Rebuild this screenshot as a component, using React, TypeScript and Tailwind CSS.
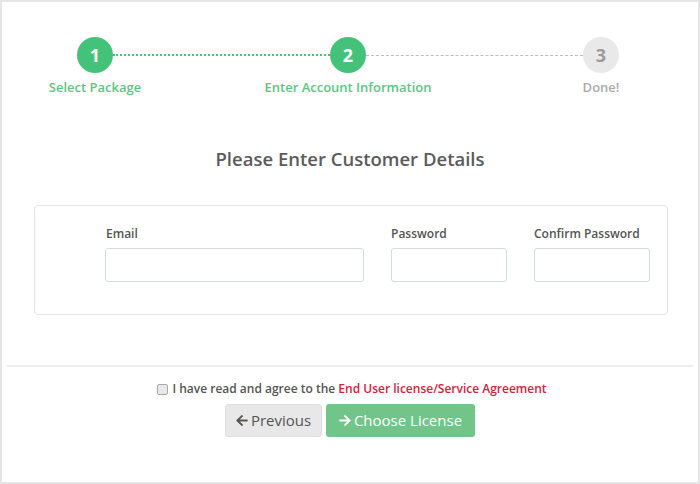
import React from "react";

const font = "font-['Open_Sans',_'Liberation_Sans',_sans-serif]";

function Circle({ n, active }: { n: number; active: boolean }) {
  return (
    <div
      className={`w-[36px] h-[36px] rounded-full flex items-center justify-center text-[18px] font-bold shrink-0 ${
        active ? "bg-[#45c27a] text-white" : "bg-[#e9e9e9] text-[#9a9a9a]"
      }`}
    >
      {n}
    </div>
  );
}

function ArrowLeft({ className }: { className?: string }) {
  return (
    <svg viewBox="0 0 448 512" className={className} fill="currentColor">
      <path d="M257.5 445.1l-22.2 22.2c-9.4 9.4-24.6 9.4-33.9 0L7 273c-9.4-9.4-9.4-24.6 0-33.9L201.4 44.7c9.4-9.4 24.6-9.4 33.9 0l22.2 22.2c9.5 9.5 9.3 25-.4 34.3L136.6 216H424c13.3 0 24 10.7 24 24v32c0 13.3-10.7 24-24 24H136.6l120.5 114.8c9.8 9.3 10 24.8.4 34.3z" />
    </svg>
  );
}

function ArrowRight({ className }: { className?: string }) {
  return (
    <svg viewBox="0 0 448 512" className={className} fill="currentColor">
      <path d="M190.5 66.9l22.2-22.2c9.4-9.4 24.6-9.4 33.9 0L441 239c9.4 9.4 9.4 24.6 0 33.9L246.6 467.3c-9.4 9.4-24.6 9.4-33.9 0l-22.2-22.2c-9.5-9.5-9.3-25 .4-34.3L311.4 296H24c-13.3 0-24-10.7-24-24v-32c0-13.3 10.7-24 24-24h287.4L190.9 101.2c-9.8-9.3-10-24.8-.4-34.3z" />
    </svg>
  );
}

export default function App() {
  return (
    <div className={`w-[700px] h-[484px] bg-white border-2 border-[#e6e6e6] ${font} overflow-hidden`}>
      {/* Stepper */}
      <div className="pt-[35px]">
        <div className="ml-[75px] w-[542px] flex items-center">
          <Circle n={1} active />
          <div className="flex-1 border-t-2 border-dotted border-[#45c27a]" />
          <Circle n={2} active />
          <div className="flex-1 border-t border-dashed border-[#bdbdbd]" />
          <Circle n={3} active={false} />
        </div>
        <div className="ml-[93px] w-[506px] flex justify-between mt-[5px] text-[13px] font-semibold leading-[18px]">
          <div className="w-0 flex justify-center whitespace-nowrap text-[#5cc583]">Select Package</div>
          <div className="w-0 flex justify-center whitespace-nowrap text-[#5cc583]">Enter Account Information</div>
          <div className="w-0 flex justify-center whitespace-nowrap text-[#aaaaaa]">Done!</div>
        </div>
      </div>

      {/* Title */}
      <h1 className="mt-[50px] text-center text-[18.5px] font-semibold text-[#5b5b5b] leading-[26px]">
        Please Enter Customer Details
      </h1>

      {/* Card */}
      <div className="mt-[33px] ml-[32px] w-[634px] h-[110px] border border-[#e3e6ea] rounded-[4px] pl-[70px] pr-[18px] pt-[19px]">
        <div className="grid grid-cols-[259px_116px_116px] gap-x-[27px]">
          <label className="text-[12px] font-semibold text-[#555] leading-[17px] pl-[1px]">Email</label>
          <label className="text-[12px] font-semibold text-[#555] leading-[17px]">Password</label>
          <label className="text-[12px] font-semibold text-[#555] leading-[17px]">Confirm Password</label>
          <input className="mt-[6px] h-[34px] border border-[#d5dbe1] rounded-[3px] bg-white outline-none" />
          <input className="mt-[6px] h-[34px] border border-[#d5dbe1] rounded-[3px] bg-white outline-none" />
          <input className="mt-[6px] h-[34px] border border-[#d5dbe1] rounded-[3px] bg-white outline-none" />
        </div>
      </div>

      {/* Divider */}
      <div className="mt-[50px] mx-[5px] border-t-2 border-[#eeeeee]" />

      {/* Agreement */}
      <div className="mt-[14px] flex items-center justify-center text-[12px] font-semibold leading-[16px]">
        <span className="w-[11px] h-[11px] border border-[#a9a9a9] rounded-[2px] bg-[#e8e8e8] mr-[4px] ml-[4px]" />
        <span className="text-[#555]">I have read and agree to the&nbsp;</span>
        <span className="text-[#d2233c]">End User license/Service Agreement</span>
      </div>

      {/* Buttons */}
      <div className="mt-[7px] flex justify-center gap-[4px]">
        <button className="w-[97px] h-[33px] rounded-[3px] bg-[#e8e8e8] border border-[#dedede] text-[#555] text-[15px] flex items-center justify-center gap-[3px]">
          <ArrowLeft className="w-[12px] h-[13px]" />
          Previous
        </button>
        <button className="w-[149px] h-[33px] rounded-[3px] bg-[#71c588] text-white text-[15px] flex items-center justify-center gap-[3px]">
          <ArrowRight className="w-[12px] h-[13px]" />
          Choose License
        </button>
      </div>
    </div>
  );
}
